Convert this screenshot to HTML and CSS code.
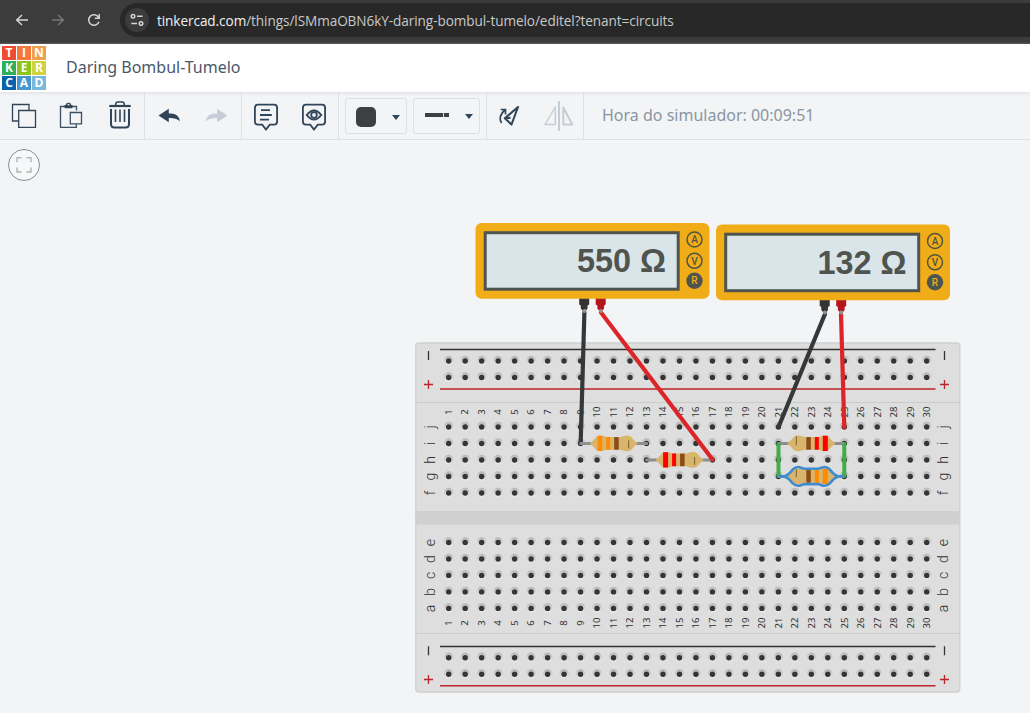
FILE: index.html
```html
<!DOCTYPE html>
<html lang="pt-BR">
<head>
<meta charset="utf-8">
<title>Daring Bombul-Tumelo</title>
<link rel="stylesheet" href="styles.css">
</head>
<body>
<div class="browser">
  <svg class="nav" width="110" height="44" fill="none" stroke="#d4d4d4" stroke-width="1.5">
    <path d="M28 20H17M22 15l-5.3 5 5.3 5"/>
    <path stroke="#777" d="M52 20h11M58 15l5.3 5-5.3 5"/>
    <path d="M98.600 17.300A5.300 5.300 0 1 0 99 21.800M99.200 14v4.300h-4.400"/>
  </svg>
  <div class="address">
    <svg class="site-info" width="24" height="24" fill="none" stroke="#d8d8d8" stroke-width="1.4">
      <circle cx="8" cy="8.300" r="1.800"/><path d="M12 8.300h5.500M6.300 15.500H12"/><circle cx="16" cy="15.500" r="1.800"/>
    </svg>
    <span class="url"><b>tinkercad.com</b>/things/lSMmaOBN6kY-daring-bombul-tumelo/editel?tenant=circuits</span>
  </div>
</div>
<header class="header">
  <div class="logo">
    <span class="c1">T</span><span class="c2">I</span><span class="c3">N</span>
    <span class="c4">K</span><span class="c5">E</span><span class="c6">R</span>
    <span class="c7">C</span><span class="c8">A</span><span class="c9">D</span>
  </div>
  <h1 class="title">Daring Bombul-Tumelo</h1>
</header>
<div class="toolbar">
  <div class="group">
    <svg class="tool" viewBox="0 0 48 47"><g fill="#f2f4f6" stroke="#314558" stroke-width="1.300"><path d="M12.500 12.500h16.500v16.500h-16.500z"/><path d="M18.700 18.500h16.800v16.800h-16.800z"/></g></svg>
    <svg class="tool" viewBox="0 0 48 47"><g fill="none" stroke="#3c5063" stroke-width="1.300"><path d="M17 14.500h-4.500v20.800h15.800v-3M24 14.500h4.500v4"/><path fill="#f2f4f6" d="M22.300 20.500h11.200v11.300h-11.200z"/><path fill="#314558" stroke="none" d="M16 14.500q0-1.800 2-1.800c0-2.500 5-2.500 5 0q2 0 2 1.800l-1 1.800h-7z"/><circle cx="20.500" cy="12.600" r=".9" fill="#fff" stroke="none"/></g></svg>
    <svg class="tool" viewBox="0 0 48 47"><g fill="none" stroke="#314558" stroke-width="2"><path d="M13.300 14h21.400" stroke-width="2.200"/><path d="M19.700 13q0-3 2-3h4.600q2 0 2 3" stroke-width="1.600"/><path d="M15 17v15q0 3.500 3.500 3.500h11q3.500 0 3.500-3.500v-15"/><path d="M19.500 17.500v12.500M24 17.500v12.500M28.500 17.500v12.500" stroke-width="1.600"/></g></svg>
  </div>
  <div class="group">
    <svg class="tool" viewBox="0 0 48 47"><path fill="#314558" d="M13.500 23.500l10.300-6.700v4.600c6 0 10.500 1.500 11 8-2.500-2.500-5.500-3.400-11-3.400v4.200z"/></svg>
    <svg class="tool" viewBox="0 0 48 47"><path fill="#c5ced6" d="M34.500 23.500l-10.300-6.700v4.600c-6 0-10.500 1.500-11.400 8 2.500-2.500 5.900-3.400 11.400-3.400v4.200z"/></svg>
  </div>
  <div class="group">
    <svg class="tool" viewBox="0 0 48 47"><g fill="none" stroke="#314558" stroke-width="1.800"><path d="M16 12.700h16q3.100 0 3.100 3.200v13.500q0 3.200-3.100 3.200h-4.200l-3.800 4.900-3.800-4.900h-4.200q-3.100 0-3.100-3.200v-13.500q0-3.200 3.100-3.200z"/><path d="M19 18.200h9M18 23h11.800M18 27.600h9"/></g></svg>
    <svg class="tool" viewBox="0 0 48 47"><g fill="none" stroke="#314558" stroke-width="1.800"><path d="M16 12.700h16q3.100 0 3.100 3.200v13.500q0 3.200-3.100 3.200h-4.200l-3.800 4.900-3.800-4.900h-4.200q-3.100 0-3.100-3.200v-13.500q0-3.200 3.100-3.200z"/><path stroke-width="2" d="M16.800 23q7.200-9.200 14.400 0-7.200 9.200-14.400 0z"/><circle cx="24" cy="23" r="3.700" fill="#314558" stroke="none"/><circle cx="24" cy="23" r="1.900" fill="#f2f4f6" stroke="none"/></g></svg>
  </div>
  <div class="group pickers">
    <div class="picker color"><i class="swatch"></i><i class="caret"></i></div>
    <div class="picker wire"><i class="line"></i><i class="caret"></i></div>
  </div>
  <div class="group">
    <svg class="tool" viewBox="0 0 48 47"><g fill="none" stroke="#314558"><path stroke-width="2.100" stroke-linejoin="round" d="M31 15L17.800 26.300l6.700 6.200zM17.800 26.300l5.800-.5"/><path stroke-width="1.700" d="M14.500 31c-2.400-4-1.300-9 3.700-13.500M13.700 17.500h4.800v5"/></g></svg>
    <svg class="tool" viewBox="0 0 48 47"><g fill="none" stroke="#c5ced6"><path stroke-width="1.400" stroke-linejoin="round" d="M20.300 15v17.500h-10.300z"/><path stroke-width="2" d="M24 9v30"/><path stroke-width="2" stroke-linejoin="round" d="M28.300 15.500v17h9z"/></g></svg>
  </div>
  <div class="clock">Hora do simulador: 00:09:51</div>
</div>
<main class="workspace">
  <svg class="circuit" viewBox="0 140 1030 573">
    <defs>
      <linearGradient id="fade" x1="0" x2="0" y1="0" y2="1"><stop offset="0" stop-color="#b7b7b7"/><stop offset=".5" stop-color="#cecece"/><stop offset="1" stop-color="#ececec"/></linearGradient>
      <g id="hole"><circle r="4.700" cy="-.5" fill="url(#fade)"/><circle r="2.700" fill="#353535"/></g>
      <g id="body"><path fill="none" stroke="#8e8e8e" stroke-width="3" stroke-linecap="round" d="M-33 0H33"/><path fill="#d8b46d" d="M-24 0Q-20-3-17.500-6.500Q-15-8.500-11-7.700L-7-6.300H7L11-7.700Q15-8.500 17.500-6.500Q20-3 24 0Q20 3 17.500 6.500Q15 8.500 11 7.700L7 6.300H-7L-11 7.700Q-15 8.500-17.500 6.500Q-20 3-24 0Z"/></g>
      <g id="meter">
        <path fill="#343434" d="M103.700 75h10v6.500l-1.700 1v3l-1.500 2h-3.500l-1.700-2v-3l-1.600-1z"/>
        <path fill="#b4171b" d="M120.200 75h10v6.500l-1.600 1v3l-1.600 2h-3.500l-1.600-2v-3l-1.700-1z"/>
        <rect width="234" height="75.700" rx="6" fill="#f0ad18"/>
        <rect x="9.700" y="9.700" width="193" height="56.500" fill="#dae5e9" stroke="#50544f" stroke-width="3"/>
        <g fill="none" stroke="#50543f" stroke-width="1.500"><circle cx="219" cy="16.500" r="7.500"/><circle cx="219" cy="37.800" r="7.500"/></g>
        <circle cx="219" cy="57.700" r="8.200" fill="#50544f"/>
        <g class="mode" text-anchor="middle"><text x="219" y="20.200">A</text><text x="219" y="41.500">V</text><text x="219" y="61.400" fill="#f0ad18">R</text></g>
      </g>
    </defs>
    <circle cx="24" cy="165" r="15.500" fill="#f7f8fa" stroke="#8d8d8d"/>
    <path fill="none" stroke="#b3b3b3" stroke-width="1.400" d="M17 162v-4.200h4.500M26.500 157.800H31v4.200M31 167.500v4.500h-4.500M21.500 172H17v-4.500"/>

    <rect x="415.800" y="343" width="544" height="349" rx="3" fill="#dedede" stroke="#cfcfcf" stroke-width="1.300"/>
    <path fill="#d0d0d0" d="M415.500 511h544.500v13.500H415.500z"/>
    <path stroke="#cbcbcb" d="M416 402.500h544M416 633.500h544"/>
    <path stroke="#333" stroke-width="1.500" d="M440 349.500h495.500M440 646.500h495.500"/>
    <path stroke="#bd2429" stroke-width="1.600" d="M440 389h495.500M440 685.800h495.500"/>
    <path stroke="#333" stroke-width="1.300" d="M428.500 351v9M944.500 351v9M428.500 646.200v9M944.500 646.200v9"/>
    <path stroke="#bd2429" stroke-width="1.300" d="M424 384.500h9m-4.500-4.500v9M940 384.500h9m-4.500-4.500v9M424 679.500h9m-4.500-4.500v9M940 679.500h9m-4.500-4.500v9"/>
    <g id="holes"></g>
    <g id="labels" class="labels"></g>

    <g transform="translate(613.700 443.400)"><use href="#body"/><path fill="#ff8c00" d="M-16-7.700h4.500v15.400h-4.500zM-7.500-6.300h4v12.600h-4z"/><path fill="#8b4a16" d="M.5-6.300h4.500v12.600H.5z"/><path stroke="#796326" d="M15-3v8"/><path stroke="#d6c044" d="M15-7.500v4"/></g>
    <g transform="translate(679.600 459.900)"><use href="#body"/><path fill="#f00" d="M-16.500-7.700h5v15.400h-5zM-7.500-6.300h4v12.600h-4z"/><path fill="#8b4a16" d="M.5-6.300h4.500v12.600H.5z"/><path stroke="#796326" d="M15-3v8"/><path stroke="#d6c044" d="M15-7.500v4"/></g>
    <g transform="translate(811.300 443.400)"><use href="#body"/><path fill="#8b4a16" d="M-5-6.300h4.500v12.600H-5z"/><path fill="#f00" d="M3.500-6.300h4v12.600h-4zM11.500-7.700h5v15.400h-5z"/><path stroke="#796326" d="M-15-7v9"/></g>
    <g transform="translate(811.300 476.400)"><use href="#body"/><path fill="#8b4a16" d="M-5-6.300h4.500v12.600H-5z"/><path fill="#ff8c00" d="M3.500-6.300h4v12.600h-4zM11.500-7.700h5v15.400h-5z"/><path stroke="#796326" d="M-15-7v8"/></g>
    <path fill="none" stroke="#41ad49" stroke-width="4" stroke-linecap="round" d="M778.500 444v32M844.300 444v32"/>
    <path fill="none" stroke="#3f8bd0" stroke-width="2.600" stroke-linecap="round" stroke-linejoin="round" transform="translate(811.300 476.400)" d="M-32 0h5M27 0h5M-27 0Q-22-2-18.500-7Q-15-10.300-11-9L-7-7.700H7L11-9Q15-10.300 18.500-7Q22-2 27 0Q22 2 18.500 7Q15 10.300 11 9L7 7.700H-7L-11 9Q-15 10.300-18.500 7Q-22 2-27 0Z"/>

    <use href="#meter" x="475.500" y="223"/>
    <use href="#meter" x="716" y="224.500"/>
    <g class="reading"><text x="577" y="272" textLength="89" lengthAdjust="spacingAndGlyphs">550 Ω</text><text x="817.500" y="273.500" textLength="89" lengthAdjust="spacingAndGlyphs">132 Ω</text></g>
    <g fill="none" stroke-width="4.200" stroke-linecap="round">
      <path stroke="#34383a" d="M584.400 312L580.700 442M825 314L778.500 427"/>
      <path stroke="#dc2529" d="M601 312.500L712.500 459.500M841 314L844.300 427.500"/>
    </g>
    <g fill="#96908f"><circle cx="584.400" cy="311" r="2"/><circle cx="600.900" cy="311" r="2"/><circle cx="824.800" cy="312.600" r="2"/><circle cx="841.200" cy="312.600" r="2"/></g>
    <path stroke="#929292" stroke-width="2.500" stroke-linecap="round" d="M580.700 443.200h7"/>
  </svg>
</main>
<script src="board.js"></script>
</body>
</html>
```
FILE: styles.css
```css
* { box-sizing: border-box; }
body { margin: 0; height: 713px; overflow: hidden; display: flex; flex-direction: column; background: #f2f4f6; font-family: "Noto Sans", sans-serif; }
.browser { height: 44px; flex: none; display: flex; background: #3c3c3c; }
.nav { flex: none; }
.address { flex: 1; display: flex; align-items: center; height: 34px; margin: 3px 0 0 10px; padding-left: 5px; background: #282828; border-radius: 17px 0 0 17px; }
.site-info { flex: none; background: #3c3c3c; border-radius: 50%; }
.url { margin-left: 8px; font: 13.6px "Open Sans", sans-serif; letter-spacing: -.08px; color: #c9c9c9; white-space: nowrap; }
.url b { font-weight: 400; color: #f0f0f0; }
.header { height: 48px; flex: none; display: flex; align-items: center; background: #fff; position: relative; box-shadow: 0 1px 3px #d9dde1; padding-left: 2px; }
.logo { display: grid; grid-template-columns: repeat(3, 14px); grid-auto-rows: 14px; gap: 1px; color: #fff; font: 700 12px/14px "Open Sans", sans-serif; text-align: center; }
.c1 { background: #ef4a32; } .c2 { background: #f5793d; } .c3 { background: #efa04d; }
.c4 { background: #2fae5c; } .c5 { background: #8bc51d; } .c6 { background: #d2d13e; }
.c7 { background: #0862ae; } .c8 { background: #4795ce; } .c9 { background: #76b9dc; }
.title { margin: -2px 0 0 20px; font-size: 16px; font-weight: 400; line-height: 24px; color: #4b5769; white-space: nowrap; }
.toolbar { height: 48px; flex: none; display: flex; border-bottom: 1px solid #dcdfe3; }
.group { display: flex; border-right: 1px solid #dcdfe3; }
.tool { display: block; width: 48px; height: 47px; }
.pickers { width: 148px; padding: 6px 0 0 6px; gap: 6px; }
.picker { height: 36px; border: 1px solid #dcdfe3; border-radius: 3px; display: flex; align-items: center; justify-content: space-between; }
.color { width: 62px; padding: 1px 6px 0 10px; }
.wire { width: 67px; padding: 0 6px 0 11px; }
.swatch { width: 20px; height: 20px; border-radius: 5px; background: #3c4043; }
.caret { border: 4px solid transparent; border-top: 5px solid #314558; border-bottom: 0; margin-top: 1px; }
.line { width: 24px; height: 4px; margin-top: -3px; background: linear-gradient(90deg, #3c4043 18px, #d8dadc 18px 19px, #3c4043 19px); }
.clock { margin-left: 18px; font-size: 16px; line-height: 46px; color: #8996a2; white-space: nowrap; }
.workspace { flex: 1; min-height: 0; }
.circuit { display: block; width: 1030px; height: 573px; }
.mode { font: 500 10px Roboto, sans-serif; fill: #50543f; }
.reading { font: 700 33px "Liberation Sans", Arial, sans-serif; fill: #50544f; }
.labels { fill: #303030; font-family: "Noto Sans", sans-serif; text-anchor: middle; }
.number { font-size: 9.5px; }
.letter { font-family: Roboto, sans-serif; font-size: 14px; font-weight: 300; }
```
FILE: board.js
```js
const NS = "http://www.w3.org/2000/svg";
const holes = document.getElementById("holes");
const labels = document.getElementById("labels");
const column = n => 448.7 + (n - 1) * 16.483;
const rows = { j: 427, i: 443.5, h: 460, g: 476.5, f: 493, e: 542.5, d: 559, c: 575.4, b: 591.9, a: 608.4 };

function label(text, x, y, type) {
  const node = document.createElementNS(NS, "text");
  node.textContent = text;
  node.setAttribute("class", type);
  node.setAttribute("transform", `translate(${x} ${y}) rotate(-90)`);
  labels.append(node);
}

for (let n = 1; n <= 30; n++) {
  for (const y of [361, 377.5, ...Object.values(rows), 657.8, 674.2]) {
    const hole = document.createElementNS(NS, "use");
    hole.setAttribute("href", "#hole");
    hole.setAttribute("x", column(n));
    hole.setAttribute("y", y);
    holes.append(hole);
  }
  label(n, column(n) + 3.3, 412, "number");
  label(n, column(n) + 3.3, 623, "number");
}
for (const [letter, y] of Object.entries(rows)) {
  label(letter, 435, y, "letter");
  label(letter, 947.5, y, "letter");
}
```
